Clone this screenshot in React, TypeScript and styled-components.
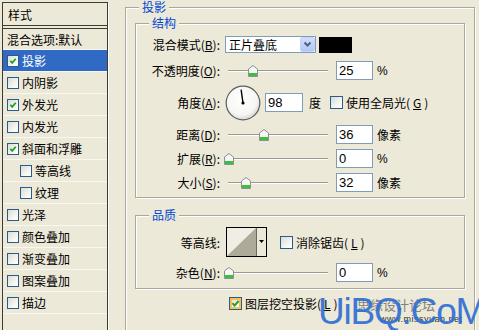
import React from 'react';
import styled, { createGlobalStyle } from 'styled-components';

const GlobalStyle = createGlobalStyle`
  html, body { margin: 0; padding: 0; background: #ece9d8; }
  body {
    font-family: "Noto Sans CJK SC", "Noto Sans", sans-serif;
    font-size: 12px;
    color: #000;
  }
`;

const Window = styled.div`
  position: relative;
  width: 479px;
  height: 330px;
  overflow: hidden;
  display: flex;
  align-items: flex-start;
  background: #ece9d8;
`;

/* ---------- left style list ---------- */
const StyleList = styled.div`
  box-sizing: border-box;
  flex: none;
  width: 106px;
  height: 345px;
  margin: 2px 0 0 2px;
  border: 1px solid #3c3b36;
  box-shadow: 1px 1px 0 #fff;
  display: flex;
  flex-direction: column;
`;

const ListHeader = styled.div`
  height: 22px;
  display: flex;
  align-items: center;
  padding-left: 5px;
  border-bottom: 4px double #3c3b36;
`;

const ListItem = styled.div<{ $selected?: boolean; $indent?: boolean; $h?: number }>`
  box-sizing: border-box;
  height: ${p => p.$h ?? 22}px;
  display: flex;
  align-items: center;
  gap: 3px;
  padding-left: ${p => (p.$indent ? 17 : 4)}px;
  border-bottom: 1px solid #f8f7f1;
  background: ${p => (p.$selected ? '#316ac5' : 'transparent')};
  color: ${p => (p.$selected ? '#fff' : '#000')};
  white-space: nowrap;
`;

/* ---------- checkbox ---------- */
const Box = styled.span<{ $size: number; $hover?: boolean }>`
  box-sizing: border-box;
  flex: none;
  width: ${p => p.$size}px;
  height: ${p => p.$size}px;
  border: 1px solid #2b5b88;
  background: linear-gradient(135deg, #dcdcd5 0%, #f4f4f0 60%, #fff 100%);
  display: inline-flex;
  align-items: center;
  justify-content: center;
  box-shadow: ${p => (p.$hover ? 'inset 0 0 0 2px #f6c05a' : 'none')};
`;

const Check = ({ checked, size = 13, hover }: { checked?: boolean; size?: number; hover?: boolean }) => (
  <Box $size={size} $hover={hover}>
    {checked && (
      <svg width={size - 4} height={size - 4} viewBox="0 0 9 9">
        <polyline points="1.5,4.2 3.6,6.6 7.6,2" fill="none" stroke="#21a121" strokeWidth="2" />
      </svg>
    )}
  </Box>
);

/* ---------- right side ---------- */
const Main = styled.div`
  flex: none;
  margin-left: 17px;
`;

const Group = styled.fieldset<{ $w: number; $h?: number; $pad: string; $mt?: number }>`
  box-sizing: border-box;
  margin: ${p => p.$mt ?? 0}px 0 0 0;
  min-width: 0;
  width: ${p => p.$w}px;
  ${p => (p.$h ? `height: ${p.$h}px;` : '')}
  border: 1px solid #aca899;
  box-shadow: inset 1px 1px 0 #fff, 1px 1px 0 #fff;
  padding: ${p => p.$pad};
  display: flex;
  flex-direction: column;
`;

const Legend = styled.legend<{ $ml: number }>`
  padding: 0 3px;
  margin-left: ${p => p.$ml}px;
  color: #0046d5;
  font-size: 12px;
  line-height: 14px;
  background: #ece9d8;
`;

const Row = styled.div<{ $h: number; $mt?: number }>`
  display: flex;
  align-items: center;
  height: ${p => p.$h}px;
  margin-top: ${p => p.$mt ?? 0}px;
  white-space: nowrap;
`;

const Label = styled.span`
  flex: none;
  width: 84px;
  margin-right: 4px;
  text-align: right;
  white-space: nowrap;
`;

const Select = styled.div`
  box-sizing: border-box;
  margin-left: 1px;
  width: 91px;
  height: 17px;
  border: 1px solid #7f9db9;
  background: #fff;
  display: flex;
  align-items: center;
`;

const SelectText = styled.span`
  flex: 1;
  padding-left: 3px;
`;

const DropButton = styled.span`
  box-sizing: border-box;
  width: 15px;
  height: 15px;
  border: 1px solid #c3d3fd;
  border-radius: 2px;
  background: linear-gradient(#d2defc, #b2c7f7);
  display: flex;
  align-items: center;
  justify-content: center;
`;

const Swatch = styled.span`
  width: 33px;
  height: 16px;
  margin-left: 3px;
  background: #000;
`;

const SliderBox = styled.div`
  position: relative;
  width: 105px;
  height: 19px;
  display: flex;
  align-items: center;
`;

const Track = styled.div`
  flex: 1;
  margin: 0 1px 0 4px;
  height: 1px;
  background: #9d9a8c;
  box-shadow: 0 1px 0 #fff;
`;

const Thumb = styled.svg`
  position: absolute;
  top: 4px;
`;

const NumBox = styled.div<{ $w?: number; $ml?: number }>`
  box-sizing: border-box;
  width: ${p => p.$w ?? 37}px;
  height: 19px;
  margin-left: ${p => p.$ml ?? 7}px;
  border: 1px solid #7f9db9;
  background: #fff;
  padding-left: 2px;
  display: flex;
  align-items: center;
  font-family: "Liberation Sans", Arial, sans-serif;
  font-size: 13px;
`;

const Unit = styled.span<{ $ml?: number }>`
  margin-left: ${p => p.$ml ?? 4}px;
  font-family: "Liberation Sans", "Noto Sans CJK SC", sans-serif;
`;

const CheckLabel = styled.span<{ $ml: number }>`
  display: flex;
  align-items: center;
  gap: 3px;
  margin-left: ${p => p.$ml}px;
`;

const Dial = styled.svg`
  margin-left: 1px;
  flex: none;
`;

const Contour = styled.div`
  box-sizing: border-box;
  margin-left: 2px;
  width: 41px;
  height: 30px;
  border: 1px solid #000;
  display: flex;
`;

const ContourArrow = styled.span`
  flex: 1;
  border-left: 1px solid #6d6a5c;
  display: flex;
  justify-content: center;
  padding-top: 12px;
  box-sizing: border-box;
`;

const BottomRow = styled.div`
  display: flex;
  align-items: center;
  height: 14px;
  margin: 7px 0 0 94px;
  gap: 3px;
`;

const WaterGray = styled.div`
  position: absolute;
  left: 357px;
  top: 295px;
  color: #666;
  font-size: 13px;
  opacity: 0.8;
`;

const WaterUrl = styled.div`
  position: absolute;
  left: 380px;
  top: 314px;
  color: #333;
  font-family: "Liberation Sans", sans-serif;
  font-size: 9px;
  letter-spacing: 0.5px;
`;

const WaterMark = styled.div`
  position: absolute;
  left: 318px;
  top: 291px;
  color: #2f6fd6;
  font-family: "Liberation Sans", Arial, sans-serif;
  font-size: 37px;
  letter-spacing: -1.2px;
  opacity: 0.92;
`;

const Slider = ({ pos }: { pos: number }) => (
  <SliderBox>
    <Track />
    <Thumb width="10" height="12" viewBox="0 0 10 12" style={{ left: pos }}>
      <path d="M0.5 4 L5 0.5 L9.5 4 V11.5 H0.5 Z" fill="#f7f7f4" stroke="#8a9096" />
      <rect x="1" y="8" width="8" height="3" fill="#3cbf3c" />
    </Thumb>
  </SliderBox>
);

const items = [
  { label: '投影', checked: true, selected: true },
  { label: '内阴影' },
  { label: '外发光', checked: true },
  { label: '内发光' },
  { label: '斜面和浮雕', checked: true },
  { label: '等高线', indent: true },
  { label: '纹理', indent: true },
  { label: '光泽' },
  { label: '颜色叠加' },
  { label: '渐变叠加' },
  { label: '图案叠加' },
  { label: '描边' },
];

const angle = (98 * Math.PI) / 180;

export default function App() {
  return (
    <>
      <GlobalStyle />
      <Window>
        <StyleList>
          <ListHeader>样式</ListHeader>
          <ListItem $h={21}>混合选项:默认</ListItem>
          {items.map(it => (
            <ListItem key={it.label} $selected={it.selected} $indent={it.indent}>
              <Check checked={it.checked} size={12} />
              {it.label}
            </ListItem>
          ))}
        </StyleList>

        <Main>
          <Group $w={350} $h={360} $pad="2px 9px 0 9px">
            <Legend $ml={4}>投影</Legend>

            <Group $w={330} $pad="6px 0 5px 0">
              <Legend $ml={13}>结构</Legend>
              <Row $h={17}>
                <Label>混合模式(<u>B</u>):</Label>
                <Select>
                  <SelectText>正片叠底</SelectText>
                  <DropButton>
                    <svg width="9" height="7" viewBox="0 0 9 7">
                      <polyline points="1.5,1.5 4.5,4.5 7.5,1.5" fill="none" stroke="#4d6185" strokeWidth="2" />
                    </svg>
                  </DropButton>
                </Select>
                <Swatch />
              </Row>
              <Row $h={19} $mt={8}>
                <Label>不透明度(<u>O</u>):</Label>
                <Slider pos={24} />
                <NumBox>25</NumBox>
                <Unit>%</Unit>
              </Row>
              <Row $h={35} $mt={5}>
                <Label>角度(<u>A</u>):</Label>
                <Dial width="36" height="36" viewBox="0 0 36 36">
                  <defs>
                    <radialGradient id="dialg" cx="0.45" cy="0.4" r="0.6">
                      <stop offset="0" stopColor="#ffffff" />
                      <stop offset="0.75" stopColor="#f6f6f3" />
                      <stop offset="1" stopColor="#d8d8d2" />
                    </radialGradient>
                  </defs>
                  <circle cx="18" cy="18" r="16.8" fill="url(#dialg)" stroke="#5e5e5e" strokeWidth="1.2" />
                  <line
                    x1="18"
                    y1="18"
                    x2={18 + 13.5 * Math.cos(angle)}
                    y2={18 - 13.5 * Math.sin(angle)}
                    stroke="#000"
                    strokeWidth="1.4"
                  />
                  <circle cx="18" cy="18" r="1.6" fill="#000" />
                </Dial>
                <NumBox $w={38} $ml={4}>98</NumBox>
                <Unit $ml={6}>度</Unit>
                <CheckLabel $ml={9}>
                  <Check />
                  使用全局光(<u>G</u>)
                </CheckLabel>
              </Row>
              <Row $h={19} $mt={5}>
                <Label>距离(<u>D</u>):</Label>
                <Slider pos={35} />
                <NumBox>36</NumBox>
                <Unit>像素</Unit>
              </Row>
              <Row $h={19} $mt={5}>
                <Label>扩展(<u>R</u>):</Label>
                <Slider pos={0} />
                <NumBox>0</NumBox>
                <Unit>%</Unit>
              </Row>
              <Row $h={19} $mt={5}>
                <Label>大小(<u>S</u>):</Label>
                <Slider pos={17} />
                <NumBox>32</NumBox>
                <Unit>像素</Unit>
              </Row>
            </Group>

            <Group $w={330} $mt={10} $pad="5px 0 6px 0">
              <Legend $ml={13}>品质</Legend>
              <Row $h={30}>
                <Label>等高线:</Label>
                <Contour>
                  <svg width="29" height="28" viewBox="0 0 29 28">
                    <rect width="29" height="28" fill="#efede4" />
                    <polygon points="0,28 29,0 29,28" fill="#aeaa9a" />
                  </svg>
                  <ContourArrow>
                    <svg width="5" height="3" viewBox="0 0 5 3">
                      <polygon points="0,0 5,0 2.5,3" fill="#000" />
                    </svg>
                  </ContourArrow>
                </Contour>
                <CheckLabel $ml={13}>
                  <Check />
                  消除锯齿(<u>L</u>)
                </CheckLabel>
              </Row>
              <Row $h={19} $mt={6}>
                <Label>杂色(<u>N</u>):</Label>
                <Slider pos={0} />
                <NumBox>0</NumBox>
                <Unit>%</Unit>
              </Row>
            </Group>

            <BottomRow>
              <Check checked hover />
              图层挖空投影(<u>L</u>)
            </BottomRow>
          </Group>
        </Main>

        <WaterGray>思缘设计论坛</WaterGray>
        <WaterUrl>www.missyuan.net</WaterUrl>
        <WaterMark>UiBQ.CoM</WaterMark>
      </Window>
    </>
  );
}
